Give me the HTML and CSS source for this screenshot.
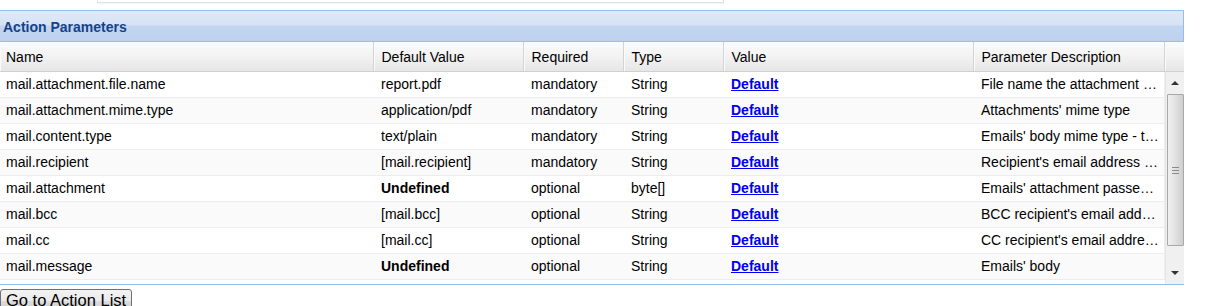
FILE: index.html
```html
<!DOCTYPE html>
<html lang="en">
<head>
    <meta charset="UTF-8">
    <title>Action Parameters</title>
    <link rel="stylesheet" href="styles.css">
</head>
<body>
    <div class="top-box"></div>

    <div class="panel">
        <div class="panel-header">Action Parameters</div>

        <table class="grid grid-head">
            <colgroup>
                <col style="width:373px"><col style="width:150px"><col style="width:100px">
                <col style="width:100px"><col style="width:250px"><col style="width:191px"><col>
            </colgroup>
            <tr>
                <th>Name</th>
                <th>Default Value</th>
                <th>Required</th>
                <th>Type</th>
                <th>Value</th>
                <th>Parameter Description</th>
                <th></th>
            </tr>
        </table>

        <div class="grid-body">
            <table class="grid grid-rows">
                <colgroup>
                    <col style="width:373px"><col style="width:150px"><col style="width:100px">
                    <col style="width:100px"><col style="width:250px"><col style="width:191px">
                </colgroup>
                <tr>
                    <td>mail.attachment.file.name</td>
                    <td>report.pdf</td>
                    <td>mandatory</td>
                    <td>String</td>
                    <td><a href="#">Default</a></td>
                    <td>File name the attachment will have</td>
                </tr>
                <tr>
                    <td>mail.attachment.mime.type</td>
                    <td>application/pdf</td>
                    <td>mandatory</td>
                    <td>String</td>
                    <td><a href="#">Default</a></td>
                    <td>Attachments' mime type</td>
                </tr>
                <tr>
                    <td>mail.content.type</td>
                    <td>text/plain</td>
                    <td>mandatory</td>
                    <td>String</td>
                    <td><a href="#">Default</a></td>
                    <td>Emails' body mime type - text/plain or text/html</td>
                </tr>
                <tr>
                    <td>mail.recipient</td>
                    <td>[mail.recipient]</td>
                    <td>mandatory</td>
                    <td>String</td>
                    <td><a href="#">Default</a></td>
                    <td>Recipient's email address list</td>
                </tr>
                <tr>
                    <td>mail.attachment</td>
                    <td class="undef">Undefined</td>
                    <td>optional</td>
                    <td>byte[]</td>
                    <td><a href="#">Default</a></td>
                    <td>Emails' attachment passed as bytes</td>
                </tr>
                <tr>
                    <td>mail.bcc</td>
                    <td>[mail.bcc]</td>
                    <td>optional</td>
                    <td>String</td>
                    <td><a href="#">Default</a></td>
                    <td>BCC recipient's email address list</td>
                </tr>
                <tr>
                    <td>mail.cc</td>
                    <td>[mail.cc]</td>
                    <td>optional</td>
                    <td>String</td>
                    <td><a href="#">Default</a></td>
                    <td>CC recipient's email address list</td>
                </tr>
                <tr>
                    <td>mail.message</td>
                    <td class="undef">Undefined</td>
                    <td>optional</td>
                    <td>String</td>
                    <td><a href="#">Default</a></td>
                    <td>Emails' body</td>
                </tr>
            </table>

            <div class="scrollbar">
                <div class="arrow up"></div>
                <div class="thumb"><span class="grip"></span></div>
                <div class="arrow down"></div>
            </div>
        </div>
    </div>

    <button class="back-btn">Go to Action List</button>
</body>
</html>
```

FILE: styles.css
```css
body {
    margin: 0;
    font-family: "Liberation Sans", Arial, sans-serif;
    font-size: 14px;
    color: #000;
    background-color: #fff;
    overflow: hidden;
}

.top-box {
    margin-left: 97px;
    width: 625px;
    height: 2px;
    border: 1px solid #dde2e8;
    border-top: none;
    box-shadow: 0 1px 1px rgba(0, 0, 0, 0.04);
}

.panel {
    margin-top: 7px;
    width: 1184px;
    border-bottom: 1px solid #99bbe8;
}

.panel-header {
    height: 30px;
    line-height: 32px;
    padding-left: 3px;
    border: 1px solid #99bbe8;
    border-left: none;
    background: linear-gradient(to bottom, #dfe9f7 0%, #d6e3f5 45%, #c3d6f0 50%, #bdd1ee 100%);
    color: #15428b;
    font-weight: bold;
    font-size: 14px;
}

.grid {
    border-collapse: collapse;
    table-layout: fixed;
}

.grid-head {
    width: 1184px;
}

.grid-head th {
    height: 29px;
    padding: 0 0 0 8px;
    text-align: left;
    font-weight: normal;
    background: linear-gradient(to bottom, #fbfbfb 0%, #f2f2f2 50%, #e6e6e6 100%);
    border-bottom: 1px solid #d0d0d0;
    border-left: 1px solid #d3d3d3;
    box-shadow: inset 1px 0 0 #fbfbfb;
}

.grid-head th:first-child {
    border-left: none;
    padding-left: 6px;
}

.grid-body {
    display: flex;
    height: 212px;
}

.grid-rows {
    width: 1164px;
    align-self: flex-start;
}

.grid-rows td {
    height: 24px;
    padding: 0 4px 1px 8px;
    border-bottom: 1px solid #ededed;
    white-space: nowrap;
    overflow: hidden;
    text-overflow: ellipsis;
}

.grid-rows td:first-child {
    padding-left: 6px;
}

.grid-rows td:last-child {
    border-right: 1px solid #ededed;
}

.grid-rows tr:nth-child(even) td {
    background-color: #fafafa;
}

.grid-rows a {
    color: #0000ee;
    font-weight: bold;
}

.undef {
    font-weight: bold;
}

.scrollbar {
    width: 19px;
    display: flex;
    flex-direction: column;
    background-color: #f0f0f0;
    border-left: 1px solid #e6e6e6;
}

.arrow {
    height: 22px;
    display: flex;
    justify-content: center;
    align-items: center;
}

.arrow.down {
    margin-top: auto;
}

.arrow::before {
    content: "";
    border-left: 4px solid transparent;
    border-right: 4px solid transparent;
}

.arrow.up::before {
    border-bottom: 4px solid #333;
}

.arrow.down::before {
    border-top: 4px solid #333;
}

.thumb {
    height: 150px;
    margin: 0 0 0 1px;
    border: 1px solid #a8a8a8;
    border-radius: 1px;
    background: linear-gradient(to right, #f0f0f0 0%, #e4e4e4 40%, #cfcfcf 100%);
    display: flex;
    justify-content: center;
    align-items: center;
}

.grip {
    width: 7px;
    height: 5px;
    border-top: 1px solid #8a8a8a;
    border-bottom: 1px solid #8a8a8a;
    background: linear-gradient(to bottom, transparent 40%, #8a8a8a 40%, #8a8a8a 60%, transparent 60%);
}

.back-btn {
    margin-top: 4px;
    padding: 1px 5px;
    font-family: "Liberation Sans", Arial, sans-serif;
    font-size: 16.5px;
    color: #000;
    border: 1px solid #707070;
    border-radius: 3px;
    background: linear-gradient(to bottom, #f2f2f2 0%, #ebebeb 50%, #dddddd 51%, #cfcfcf 100%);
}
```
